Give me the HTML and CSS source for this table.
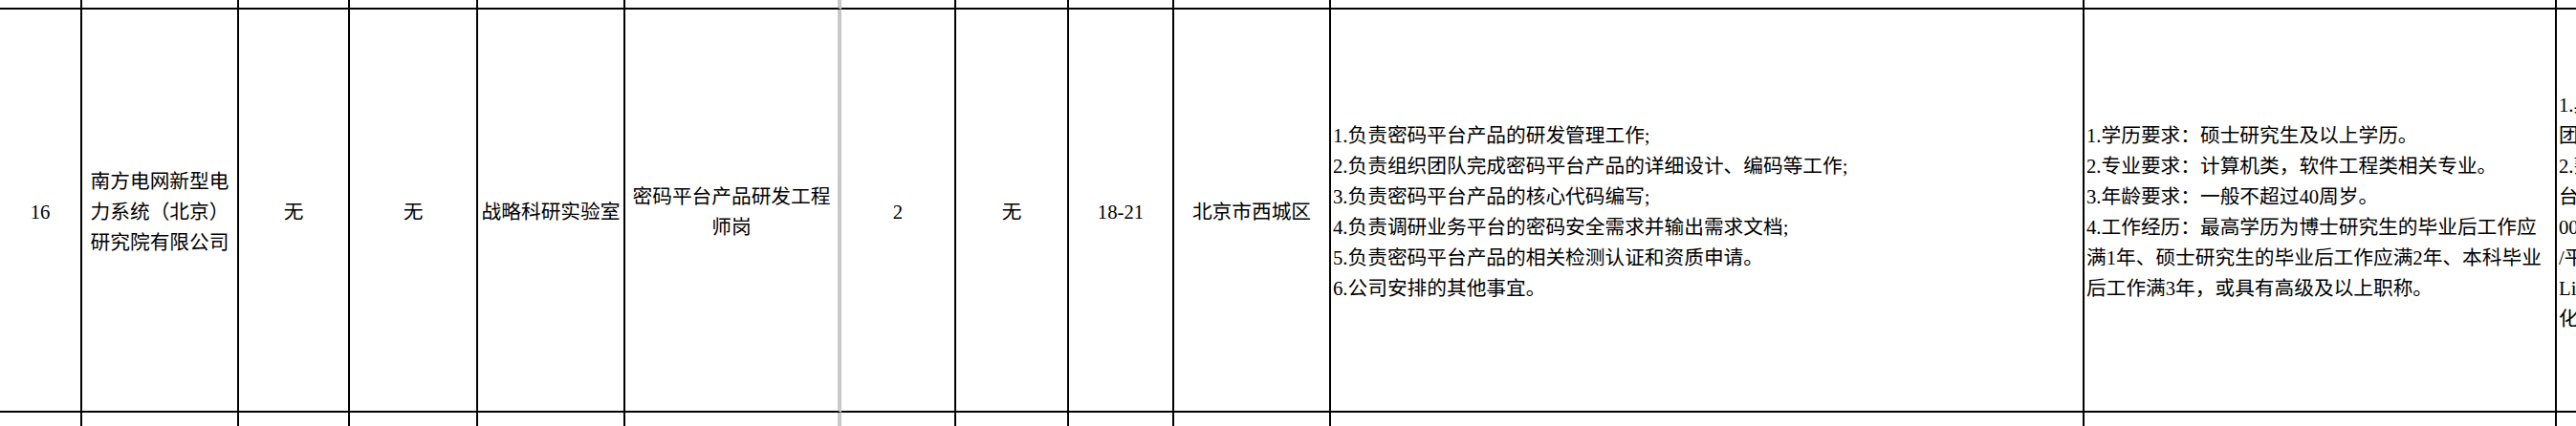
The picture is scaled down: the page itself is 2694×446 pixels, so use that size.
FILE: index.html
```html
<!DOCTYPE html>
<html lang="zh-CN">
<head>
<meta charset="utf-8">
<title>招聘岗位</title>
<link rel="stylesheet" href="styles.css">
</head>
<body>
<div class="sheet">
  <div class="cell edge-top"></div><div class="cell edge-top"></div><div class="cell edge-top"></div><div class="cell edge-top"></div><div class="cell edge-top"></div><div class="cell edge-top sep"></div><div class="cell edge-top"></div><div class="cell edge-top"></div><div class="cell edge-top"></div><div class="cell edge-top"></div><div class="cell edge-top"></div><div class="cell edge-top"></div><div class="cell edge-top"></div>

  <div class="cell main"><div class="txt">16</div></div>
  <div class="cell main"><div class="txt">南方电网新型电力系统（北京）研究院有限公司</div></div>
  <div class="cell main"><div class="txt">无</div></div>
  <div class="cell main"><div class="txt">无</div></div>
  <div class="cell main"><div class="txt nowrap">战略科研实验室</div></div>
  <div class="cell main sep"><div class="txt">密码平台产品研发工程师岗</div></div>
  <div class="cell main"><div class="txt">2</div></div>
  <div class="cell main"><div class="txt">无</div></div>
  <div class="cell main"><div class="txt">18-21</div></div>
  <div class="cell main"><div class="txt">北京市西城区</div></div>
  <div class="cell main left"><div class="txt">1.负责密码平台产品的研发管理工作;<br>2.负责组织团队完成密码平台产品的详细设计、编码等工作;<br>3.负责密码平台产品的核心代码编写;<br>4.负责调研业务平台的密码安全需求并输出需求文档;<br>5.负责密码平台产品的相关检测认证和资质申请。<br>6.公司安排的其他事宜。</div></div>
  <div class="cell main left"><div class="txt">1.学历要求：硕士研究生及以上学历。<br>2.专业要求：计算机类，软件工程类相关专业。<br>3.年龄要求：一般不超过40周岁。<br>4.工作经历：最高学历为博士研究生的毕业后工作应<br>满1年、硕士研究生的毕业后工作应满2年、本科毕业<br>后工作满3年，或具有高级及以上职称。</div></div>
  <div class="cell main left"><div class="txt nowrap">1.具有良好的沟通协调能力和<br>团队协作精神；<br>2.熟悉密码机、签名验签服务器等密码平<br>台产品，熟悉GM/T 0018、GM/T<br>0054等标准；熟悉C/C++、Java<br>/平台研发经验；熟悉Windows、<br>Linux等操作系统，具有国产<br>化适配经验者优先。</div></div>

  <div class="cell edge-bottom"></div><div class="cell edge-bottom"></div><div class="cell edge-bottom"></div><div class="cell edge-bottom"></div><div class="cell edge-bottom"></div><div class="cell edge-bottom sep"></div><div class="cell edge-bottom"></div><div class="cell edge-bottom"></div><div class="cell edge-bottom"></div><div class="cell edge-bottom"></div><div class="cell edge-bottom"></div><div class="cell edge-bottom"></div><div class="cell edge-bottom"></div>
</div>
</body>
</html>
```

FILE: styles.css
```css
html, body {
  margin: 0;
  padding: 0;
  background: #ffffff;
}

.sheet {
  width: 2694px;
  height: 446px;
  overflow: hidden;
  display: grid;
  grid-template-columns: 86px 164px 116px 134px 154px 226px 120px 118px 110px 164px 788px 494px 420px;
  grid-template-rows: 10px 422px 14px;
  font-family: "Liberation Serif", "Noto Sans CJK SC", serif;
  font-size: 20.7px;
  line-height: 32px;
  color: #000000;
}

.cell {
  box-sizing: border-box;
  border-right: 2px solid #000000;
  min-width: 0;
  overflow: hidden;
}

.cell.sep {
  border-right: 4px solid #c8c8c8;
}

.edge-top {
  border-bottom: 2px solid #000000;
}

.main {
  border-bottom: 2px solid #000000;
  display: flex;
  align-items: center;
  justify-content: center;
  padding: 4px 2px 0;
}

.main .txt {
  text-align: center;
}

.main.left {
  justify-content: flex-start;
}

.main.left .txt {
  text-align: left;
}

.txt.nowrap {
  white-space: nowrap;
}
```
